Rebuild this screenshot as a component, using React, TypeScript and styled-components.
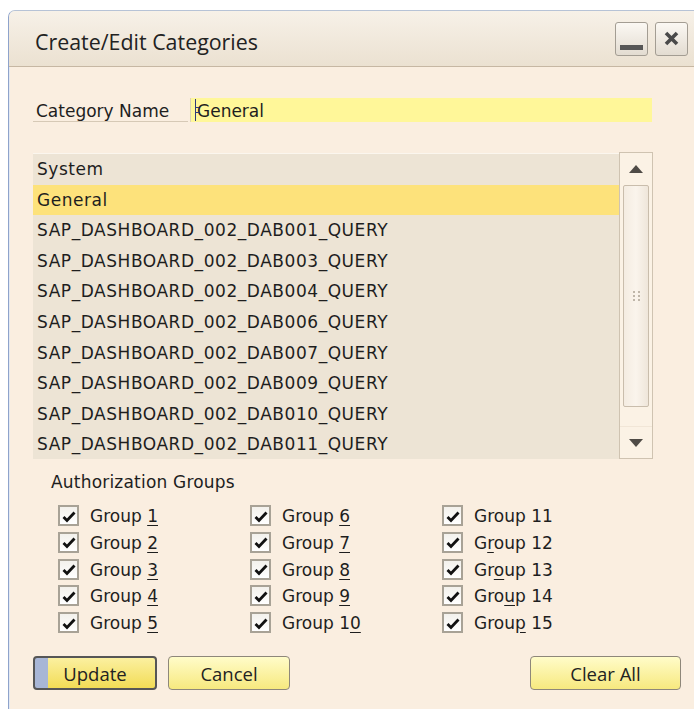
import React from "react";
import styled, { createGlobalStyle } from "styled-components";

const GlobalStyle = createGlobalStyle`
  html, body {
    margin: 0;
    padding: 0;
    background: #ffffff;
    overflow: hidden;
  }
  body {
    font-family: "DejaVu Sans", Verdana, sans-serif;
    color: #1e1e1e;
  }
  * {
    box-sizing: border-box;
  }
`;

const Window = styled.div`
  margin: 10px 0 0 8px;
  width: 700px;
  height: 699px;
  display: flex;
  flex-direction: column;
  background: #faeee0;
  border-left: 1px solid #8ea3cc;
  border-top: 1px solid #b7c3d6;
  border-top-left-radius: 7px;
  box-shadow: inset 1px 0 0 #e4e9f1;
  overflow: hidden;
`;

const TitleBar = styled.div`
  height: 56px;
  display: flex;
  align-items: center;
  padding: 0 20px 0 26px;
  background: linear-gradient(#f7f1e8, #ebe1d1);
  border-bottom: 1px solid #c6b7a3;
`;

const Title = styled.span`
  flex: 1;
  padding-top: 6px;
  font-family: "Open Sans", "Noto Sans", sans-serif;
  font-size: 21.4px;
  color: #222;
`;

const Controls = styled.div`
  display: flex;
  gap: 7px;
`;

const ControlButton = styled.div`
  width: 33px;
  height: 34px;
  display: flex;
  align-items: center;
  justify-content: center;
  border: 1px solid #a39d93;
  border-radius: 3px;
  background: linear-gradient(#fbf8f3, #e3dcd1);
  position: relative;
`;

const MinBar = styled.div`
  position: absolute;
  left: 4px;
  right: 4px;
  bottom: 5px;
  height: 5px;
  background: #575757;
`;

const Content = styled.div`
  flex: 1;
  display: flex;
  flex-direction: column;
  padding: 31px 27px 0 24px;
`;

const FieldRow = styled.div`
  display: flex;
  height: 24px;
`;

const FieldLabel = styled.div`
  width: 155px;
  padding: 2px 0 0 3px;
  font-size: 17px;
  line-height: 22px;
  border-bottom: 1px solid #d6c9b6;
`;

const FieldInput = styled.div`
  position: relative;
  margin-left: 2px;
  width: 462px;
  padding: 2px 0 0 6px;
  font-size: 17px;
  line-height: 22px;
  background: #fff799;
  border-left: 1px solid #ddd3b4;
`;

const Caret = styled.span`
  position: absolute;
  left: 4px;
  top: 1px;
  width: 4px;
  height: 22px;
  border-left: 1px solid #2f3a7a;

  &::before,
  &::after {
    content: "";
    position: absolute;
    left: 0;
    width: 3px;
    height: 1px;
    background: #2f3a7a;
  }
  &::before {
    top: 8px;
  }
  &::after {
    bottom: 8px;
  }
`;

const ListFrame = styled.div`
  margin-top: 31px;
  display: flex;
  width: 620px;
  height: 306px;
`;

const ListBody = styled.div`
  flex: 1;
  background: #ede4d5;
  border-top: 1px solid #fbf6ee;
  overflow: hidden;
`;

const ListRow = styled.div<{ $selected?: boolean }>`
  height: 30.6px;
  line-height: 30px;
  padding-left: 4px;
  font-size: 17px;
  letter-spacing: 0.55px;
  white-space: nowrap;
  background: ${({ $selected }) => ($selected ? "#fde27b" : "transparent")};
`;

const ScrollBar = styled.div`
  width: 34px;
  margin-top: -1px;
  display: flex;
  flex-direction: column;
  border: 1px solid #cfc3b1;
  background: #fbf2e5;
`;

const ArrowButton = styled.div`
  height: 31px;
  display: flex;
  align-items: center;
  justify-content: center;
`;

const Thumb = styled.div`
  height: 222px;
  margin: 1px 3px 0;
  display: flex;
  align-items: center;
  justify-content: center;
  border: 1px solid #c9bdac;
  border-radius: 2px;
  background: linear-gradient(to right, #f4ece1, #faf4ec 50%, #efe6da);
`;

const Track = styled.div`
  flex: 1;
  border-bottom: 1px solid #f1e6d7;
`;

const Grip = styled.div`
  display: grid;
  grid-template-columns: repeat(2, 2px);
  grid-auto-rows: 2px;
  gap: 2px 3px;

  span {
    background: #bfb6a9;
  }
`;

const SectionLabel = styled.div`
  margin-top: 13px;
  padding-left: 18px;
  font-size: 17px;
  line-height: 20px;
  letter-spacing: 0.2px;
`;

const GroupGrid = styled.div`
  margin-top: 13px;
  padding-left: 25px;
  display: grid;
  grid-template-columns: repeat(3, 192px);
  grid-auto-flow: column;
  grid-template-rows: repeat(4, 26.75px) 21px;
`;

const GroupItem = styled.label`
  display: flex;
  align-items: center;
  height: 21px;
  font-size: 17px;
  line-height: 21px;

  span {
    padding-top: 2px;
  }
  u {
    text-underline-offset: 3px;
  }
`;

const CheckBox = styled.span`
  width: 21px;
  height: 21px;
  margin-right: 11px;
  display: flex;
  align-items: center;
  justify-content: center;
  border: 2px solid #a8a296;
  background: linear-gradient(#f3f1ec, #ffffff);
`;

const ButtonRow = styled.div`
  margin-top: 23px;
  display: flex;
  gap: 11px;
`;

const Button = styled.div<{ $width: number; $default?: boolean; $push?: boolean }>`
  width: ${({ $width }) => $width}px;
  height: 34px;
  margin-left: ${({ $push }) => ($push ? "auto" : "0")};
  display: flex;
  align-items: center;
  justify-content: center;
  font-family: "Open Sans", "Noto Sans", sans-serif;
  font-size: 18.5px;
  color: #222;
  border-radius: 4px;
  border: ${({ $default }) => ($default ? "2px solid #565656" : "1px solid #8e877a")};
  background: ${({ $default }) =>
    $default
      ? "linear-gradient(to right, #a8b6d6 0 13px, transparent 13px), linear-gradient(#fbf0a0, #f2dc56)"
      : "linear-gradient(#fffcc9, #f7e97f)"};
`;

const categories = [
  "System",
  "General",
  "SAP_DASHBOARD_002_DAB001_QUERY",
  "SAP_DASHBOARD_002_DAB003_QUERY",
  "SAP_DASHBOARD_002_DAB004_QUERY",
  "SAP_DASHBOARD_002_DAB006_QUERY",
  "SAP_DASHBOARD_002_DAB007_QUERY",
  "SAP_DASHBOARD_002_DAB009_QUERY",
  "SAP_DASHBOARD_002_DAB010_QUERY",
  "SAP_DASHBOARD_002_DAB011_QUERY",
];

// each label is split around its mnemonic character
const groups: [string, string, string][] = [
  ["Group ", "1", ""],
  ["Group ", "2", ""],
  ["Group ", "3", ""],
  ["Group ", "4", ""],
  ["Group ", "5", ""],
  ["Group ", "6", ""],
  ["Group ", "7", ""],
  ["Group ", "8", ""],
  ["Group ", "9", ""],
  ["Group 1", "0", ""],
  ["Group 11", "", ""],
  ["G", "r", "oup 12"],
  ["Gr", "o", "up 13"],
  ["Gro", "u", "p 14"],
  ["Grou", "p", " 15"],
];

const Check = () => (
  <svg width="14" height="12" viewBox="0 0 14 12">
    <path d="M1.5 6 L5 9.5 L12.5 1.5" fill="none" stroke="#111" strokeWidth="2.8" />
  </svg>
);

const Arrow = ({ up }: { up?: boolean }) => (
  <svg width="14" height="8" viewBox="0 0 14 8">
    <path d={up ? "M0 8 L7 0 L14 8 Z" : "M0 0 L14 0 L7 8 Z"} fill="#4f4b46" />
  </svg>
);

export default function App() {
  return (
    <>
      <GlobalStyle />
      <Window>
        <TitleBar>
          <Title>Create/Edit Categories</Title>
          <Controls>
            <ControlButton>
              <MinBar />
            </ControlButton>
            <ControlButton>
              <svg width="15" height="15" viewBox="0 0 15 15">
                <path d="M2 2 L13 13 M13 2 L2 13" stroke="#4a4a4a" strokeWidth="3.6" />
              </svg>
            </ControlButton>
          </Controls>
        </TitleBar>

        <Content>
          <FieldRow>
            <FieldLabel>Category Name</FieldLabel>
            <FieldInput>
              <Caret />
              General
            </FieldInput>
          </FieldRow>

          <ListFrame>
            <ListBody>
              {categories.map((name) => (
                <ListRow key={name} $selected={name === "General"}>
                  {name}
                </ListRow>
              ))}
            </ListBody>
            <ScrollBar>
              <ArrowButton>
                <Arrow up />
              </ArrowButton>
              <Thumb>
                <Grip>
                  {Array.from({ length: 6 }).map((_, i) => (
                    <span key={i} />
                  ))}
                </Grip>
              </Thumb>
              <Track />
              <ArrowButton>
                <Arrow />
              </ArrowButton>
            </ScrollBar>
          </ListFrame>

          <SectionLabel>Authorization Groups</SectionLabel>
          <GroupGrid>
            {groups.map(([before, key, after]) => (
              <GroupItem key={before + key + after}>
                <CheckBox>
                  <Check />
                </CheckBox>
                <span>
                  {before}
                  {key && <u>{key}</u>}
                  {after}
                </span>
              </GroupItem>
            ))}
          </GroupGrid>

          <ButtonRow>
            <Button $width={124} $default>
              Update
            </Button>
            <Button $width={122}>Cancel</Button>
            <Button $width={151} $push>
              Clear All
            </Button>
          </ButtonRow>
        </Content>
      </Window>
    </>
  );
}
